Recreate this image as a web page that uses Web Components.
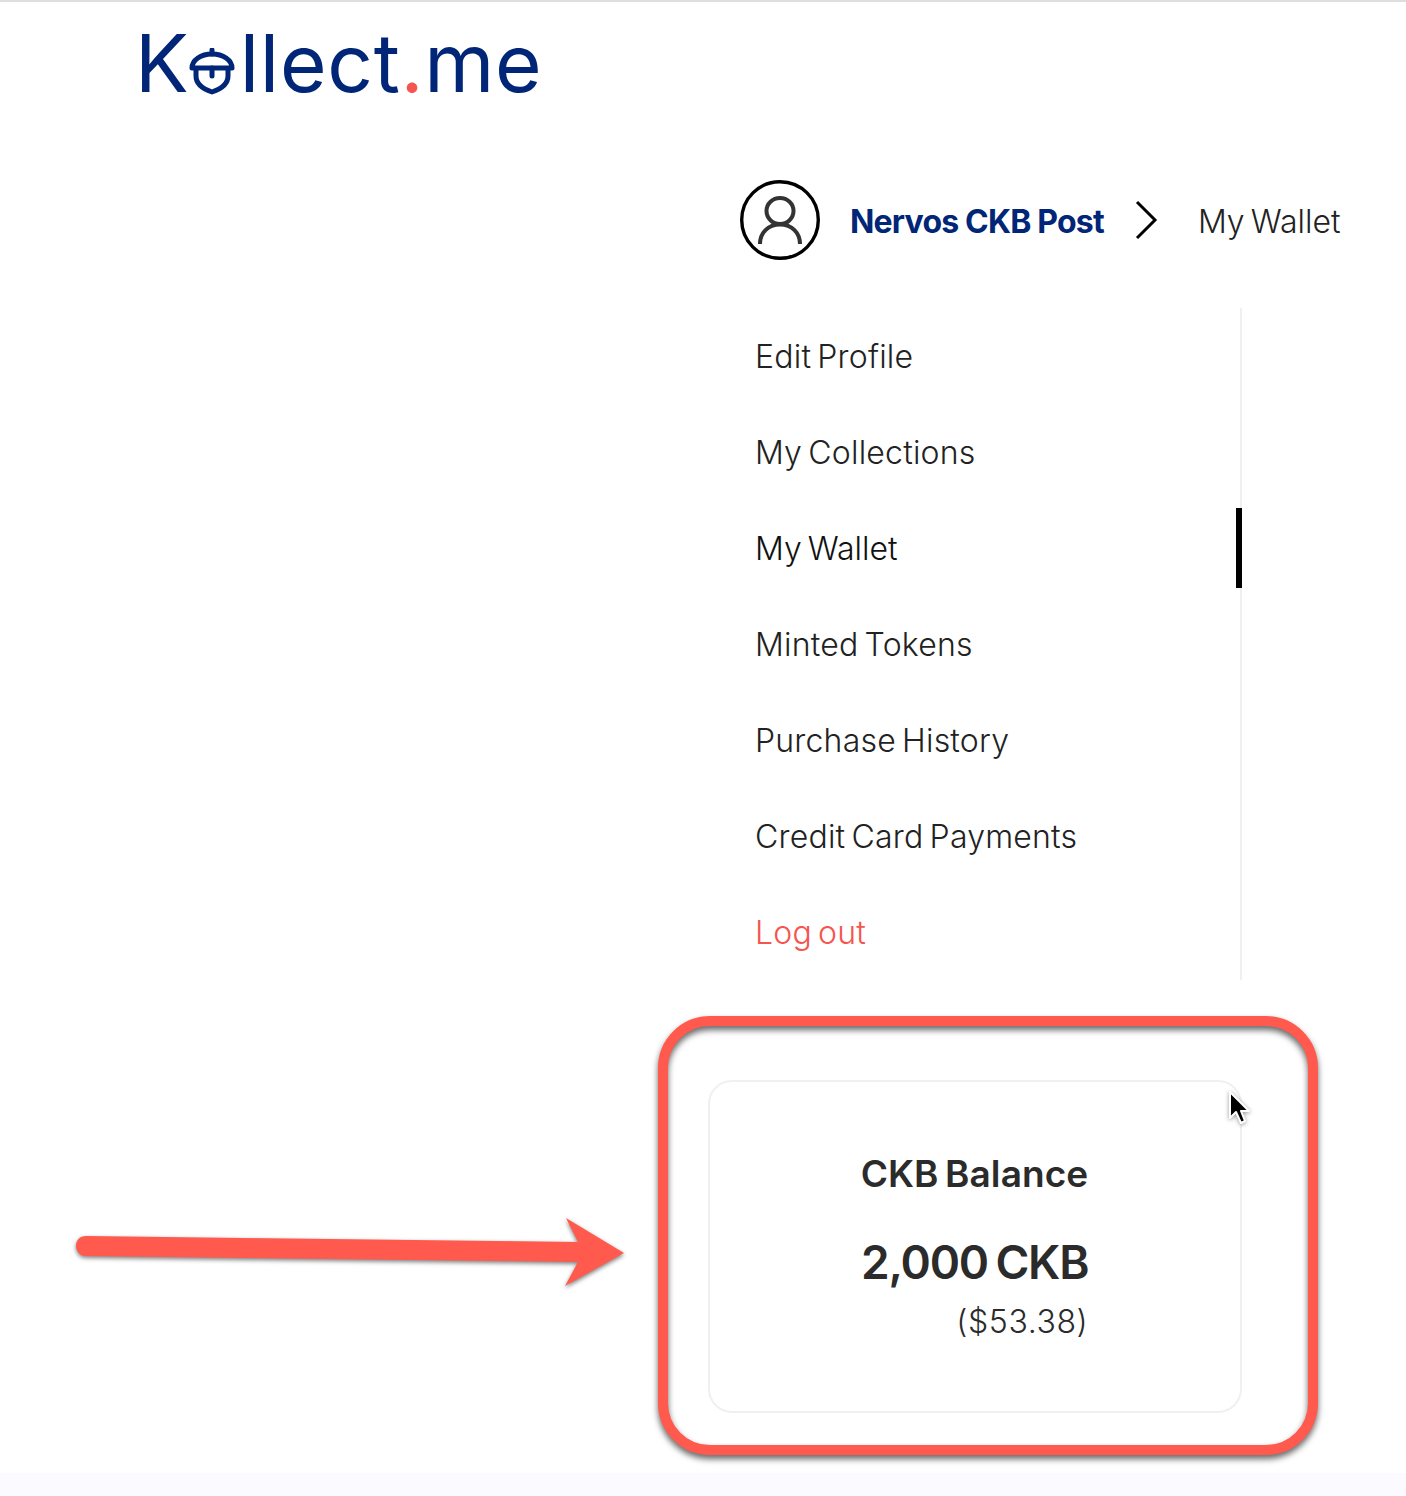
<!DOCTYPE html>
<html lang="en">
<head>
<meta charset="utf-8">
<title>Kollect.me - My Wallet</title>
<style>
  html, body { margin: 0; background: #fff; }
</style>
</head>
<body>
<wallet-page></wallet-page>

<script>
  class KollectLogo extends HTMLElement {
    constructor() {
      super();
      this.attachShadow({ mode: "open" });
      this.shadowRoot.innerHTML = `
      <style>
        :host {
          display: flex;
          align-items: baseline;
          height: 100px;
          font-family: "Inter", sans-serif;
          font-weight: 400;
          font-size: 80px;
          line-height: 94px;
          color: #012677;
        }
        svg { align-self: flex-start; margin: 32px 5px 0 0; flex: none; }
        .ll { letter-spacing: 0.7px; }
        .dot { color: #f5544f; }
      </style>
      <span>K</span>
      <svg width="46" height="47" viewBox="0 0 46 47" fill="none" stroke="#012677" stroke-width="5" stroke-linecap="round" stroke-linejoin="round" aria-hidden="true">
        <path d="M3 20C3 12 12 6 23 6s20 6 20 14z"/>
        <path d="M23 2v4"/>
        <path d="M23 20v8"/>
        <path d="M7 21v7c0 8 7 13 16 16c9-3 16-8 16-16v-7"/>
      </svg>
      <span class="ll">llect<span class="dot">.</span>me</span>`;
    }
  }
  customElements.define("kollect-logo", KollectLogo);

  class BreadcrumbBar extends HTMLElement {
    constructor() {
      super();
      this.attachShadow({ mode: "open" });
      this.shadowRoot.innerHTML = `
      <style>
        :host {
          display: flex;
          align-items: center;
          height: 80px;
          font-family: "Inter", sans-serif;
          font-size: 32px;
          color: #222;
        }
        span { padding-top: 2px; }
        .avatar { flex: none; margin-right: 30px; }
        .name { font-weight: 700; color: #012677; letter-spacing: -0.8px; }
        .chev { flex: none; margin: 0 40px 0 30px; }
        .here { font-weight: 300; letter-spacing: 0; word-spacing: -3px; }
      </style>
      <svg class="avatar" width="80" height="80" viewBox="0 0 80 80" fill="none" aria-hidden="true">
        <circle cx="40" cy="40" r="38.300" stroke="#000" stroke-width="3.400"/>
        <ellipse cx="40" cy="31" rx="13.500" ry="13" stroke="#333" stroke-width="4"/>
        <path d="M20 64c0-11 8-19.500 20-19.500S60 53 60 64" stroke="#333" stroke-width="4"/>
      </svg>
      <span class="name">Nervos CKB Post</span>
      <svg class="chev" width="24" height="40" viewBox="0 0 24 40" fill="none" stroke="#000" stroke-width="3" aria-hidden="true">
        <path d="M3 2l18 18L3 38"/>
      </svg>
      <span class="here">My Wallet</span>`;
    }
  }
  customElements.define("breadcrumb-bar", BreadcrumbBar);

  class MenuItem extends HTMLElement {
    constructor() {
      super();
      this.attachShadow({ mode: "open" });
      this.shadowRoot.innerHTML = `
      <style>
        :host {
          display: flex;
          align-items: center;
          justify-content: space-between;
          height: 96px;
          padding-left: 16px;
          font-family: "Inter", sans-serif;
          font-size: 32px;
          font-weight: 300;
          letter-spacing: 0.2px;
          word-spacing: -3px;
          color: #222;
        }
        :host([danger]) { color: #f5544f; }
        :host([active]) { color: #111; letter-spacing: 0; }
        .bar { display: none; width: 6px; height: 80px; background: #000; margin-right: -2px; }
        :host([active]) .bar { display: block; }
      </style>
      <slot></slot>
      <div class="bar"></div>`;
    }
  }
  customElements.define("menu-item", MenuItem);

  class SideMenu extends HTMLElement {
    constructor() {
      super();
      this.attachShadow({ mode: "open" });
      this.shadowRoot.innerHTML = `
      <style>
        :host {
          display: block;
          border-right: 2px solid #f0f0f0;
        }
      </style>
      <slot></slot>`;
    }
  }
  customElements.define("side-menu", SideMenu);

  class BalanceCard extends HTMLElement {
    constructor() {
      super();
      this.attachShadow({ mode: "open" });
      this.shadowRoot.innerHTML = `
      <style>
        :host {
          display: flex;
          justify-content: center;
          box-sizing: border-box;
          height: 333px;
          padding-top: 68px;
          border: 2px solid #f0f0f0;
          border-radius: 24px;
          font-family: "Inter", sans-serif;
          color: #2b2b2b;
        }
        .inner { display: flex; flex-direction: column; align-items: flex-end; margin-left: -1px; }
        .title { font-size: 37px; font-weight: 600; line-height: 48px; letter-spacing: 0.1px; word-spacing: -3px; }
        .amount { font-size: 46px; font-weight: 600; line-height: 56px; margin-top: 36px; letter-spacing: -1.200px; word-spacing: -3px; }
        .usd { font-size: 32px; font-weight: 300; line-height: 40px; margin-top: 12px; letter-spacing: 0.6px; }
      </style>
      <div class="inner">
        <div class="title">CKB Balance</div>
        <div class="amount">2,000 CKB</div>
        <div class="usd">($53.38)</div>
      </div>`;
    }
  }
  customElements.define("balance-card", BalanceCard);

  class WalletPage extends HTMLElement {
    constructor() {
      super();
      this.attachShadow({ mode: "open" });
      this.shadowRoot.innerHTML = `
      <style>
        :host {
          display: flex;
          flex-direction: column;
          position: relative;
          height: 1496px;
          overflow: hidden;
          background: #fff;
          border-top: 2px solid #dedede;
          box-sizing: border-box;
        }
        header { padding: 14px 0 0 135px; }
        main { flex: 1; display: flex; flex-direction: column; padding-top: 64px; }
        breadcrumb-bar { margin-left: 740px; }
        side-menu { margin: 48px 0 0 740px; width: 500px; }
        side-menu menu-item { padding-left: 15px; }
        balance-card { margin: 100px 0 0 708px; width: 534px; }
        footer { height: 23px; background: #fafaff; }

        /* annotation + cursor lie over the page */
        .callout {
          position: absolute;
          left: 658px;
          top: 1014px;
          width: 660px;
          height: 439px;
          box-sizing: border-box;
          border: 10.500px solid #ff5a4d;
          border-radius: 52px;
          filter: drop-shadow(0 4px 3px rgba(0, 0, 0, 0.6));
        }
        .arrow { position: absolute; left: 70px; top: 1208px; filter: drop-shadow(0 2px 2px rgba(0, 0, 0, 0.5)); }
        .cursor { position: absolute; left: 1224px; top: 1083px; filter: drop-shadow(0 1px 2px rgba(0, 0, 0, 0.4)); }
      </style>
      <header><kollect-logo></kollect-logo></header>
      <main>
        <breadcrumb-bar></breadcrumb-bar>
        <side-menu>
          <menu-item>Edit Profile</menu-item>
          <menu-item>My Collections</menu-item>
          <menu-item active>My Wallet</menu-item>
          <menu-item>Minted Tokens</menu-item>
          <menu-item>Purchase History</menu-item>
          <menu-item>Credit Card Payments</menu-item>
          <menu-item danger>Log out</menu-item>
        </side-menu>
        <balance-card></balance-card>
      </main>
      <footer></footer>
      <div class="callout"></div>
      <svg class="arrow" width="562" height="84" viewBox="0 0 562 84" aria-hidden="true">
        <path fill="#ff5a4d" d="M16 26 L508 32 L496 8 L554 43 L495 76 L508 52 L16 46 C10 46 6 41 6 36 C6 30 10 26 16 26Z"/>
      </svg>
      <svg class="cursor" width="30" height="44" viewBox="0 0 30 44" aria-hidden="true">
        <path d="M6 7v26l6-6 5 11 4-2-4-10h8z" fill="#000" stroke="#fff" stroke-width="2" stroke-linejoin="round"/>
      </svg>`;
    }
  }
  customElements.define("wallet-page", WalletPage);
</script>
</body>
</html>
